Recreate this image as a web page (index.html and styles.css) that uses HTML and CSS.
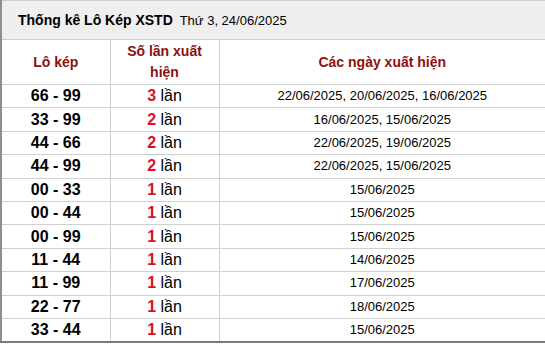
FILE: index.html
```html
<!DOCTYPE html>
<html lang="vi">
<head>
<meta charset="utf-8">
<link rel="stylesheet" href="styles.css">
</head>
<body>
<table class="stat">
  <colgroup><col class="c1"><col class="c2"><col class="c3"></colgroup>
  <thead>
    <tr class="title-row"><th colspan="3" class="title"><b>Thống kê Lô Kép XSTD</b> <span class="day">Thứ 3, 24/06/2025</span></th></tr>
    <tr class="head-row"><th>Lô kép</th><th>Số lần xuất<br>hiện</th><th>Các ngày xuất hiện</th></tr>
  </thead>
  <tbody>
    <tr><td class="pair">66 - 99</td><td class="cnt"><span class="num">3</span> lần</td><td class="dates">22/06/2025, 20/06/2025, 16/06/2025</td></tr>
    <tr><td class="pair">33 - 99</td><td class="cnt"><span class="num">2</span> lần</td><td class="dates">16/06/2025, 15/06/2025</td></tr>
    <tr><td class="pair">44 - 66</td><td class="cnt"><span class="num">2</span> lần</td><td class="dates">22/06/2025, 19/06/2025</td></tr>
    <tr><td class="pair">44 - 99</td><td class="cnt"><span class="num">2</span> lần</td><td class="dates">22/06/2025, 15/06/2025</td></tr>
    <tr><td class="pair">00 - 33</td><td class="cnt"><span class="num">1</span> lần</td><td class="dates">15/06/2025</td></tr>
    <tr><td class="pair">00 - 44</td><td class="cnt"><span class="num">1</span> lần</td><td class="dates">15/06/2025</td></tr>
    <tr><td class="pair">00 - 99</td><td class="cnt"><span class="num">1</span> lần</td><td class="dates">15/06/2025</td></tr>
    <tr><td class="pair">11 - 44</td><td class="cnt"><span class="num">1</span> lần</td><td class="dates">14/06/2025</td></tr>
    <tr><td class="pair">11 - 99</td><td class="cnt"><span class="num">1</span> lần</td><td class="dates">17/06/2025</td></tr>
    <tr><td class="pair">22 - 77</td><td class="cnt"><span class="num">1</span> lần</td><td class="dates">18/06/2025</td></tr>
    <tr><td class="pair">33 - 44</td><td class="cnt"><span class="num">1</span> lần</td><td class="dates">15/06/2025</td></tr>
  </tbody>
</table>
</body>
</html>
```
FILE: styles.css
```css
html, body {
  margin: 0;
  padding: 0;
  background: #fff;
  overflow: hidden;
}
body {
  font-family: "Liberation Sans", Arial, sans-serif;
  color: #000;
}
.stat {
  width: 546px;
  border-collapse: collapse;
  table-layout: fixed;
  border-left: 2px solid #8f8f8f;
  border-top: 1px solid #c8c8c8;
  border-bottom: 2px solid #7a7a7a;
}
.c1, .c2 { width: 109px; }
.c3 { width: auto; }
.stat th, .stat td {
  border: 1px solid #cfcfcf;
  padding: 0;
  text-align: center;
  font-size: 13px;
}
.title-row .title {
  background: #efefef;
  height: 38px;
  text-align: left;
  padding-left: 16px;
  font-size: 14px;
  font-weight: normal;
  color: #000;
}
.title b { font-weight: bold; }
.title .day {
  font-size: 13px;
  margin-left: 3px;
}
.head-row th {
  height: 44px;
  color: #8b1111;
  font-weight: bold;
  line-height: 21px;
  font-size: 14px;
}
.stat tbody tr { height: 23.4px; }
.stat tbody td {
  height: 22.4px;
  line-height: 18px;
}
.stat tbody .pair {
  font-weight: bold;
  font-size: 16px;
}
.stat tbody .cnt { font-size: 16px; }
.num {
  color: #d8102c;
  font-weight: bold;
}
.stat tbody .dates { font-size: 13px; }
```
